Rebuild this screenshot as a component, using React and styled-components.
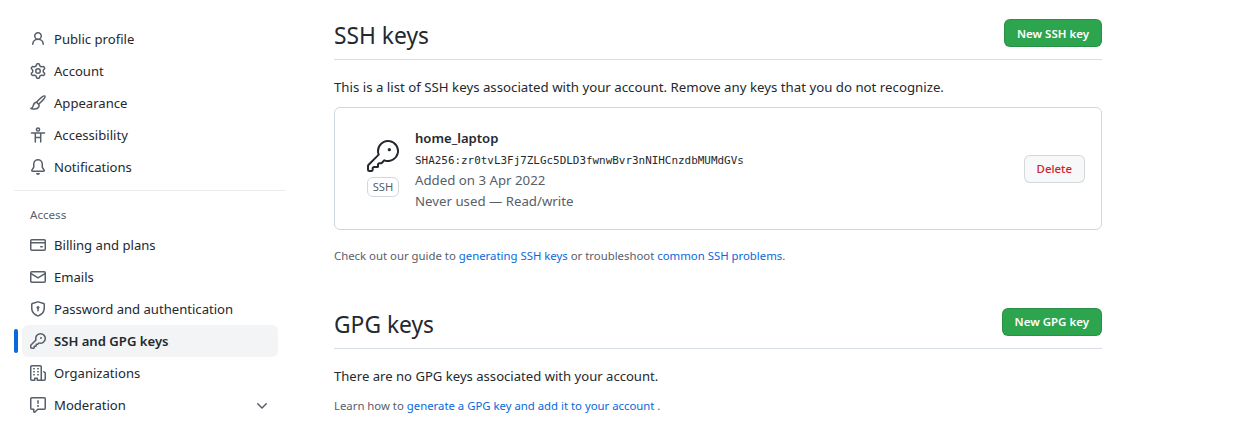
import React from "react"
import styled, { createGlobalStyle } from "styled-components"
import { GoKey } from "react-icons/go"

const GlobalStyle = createGlobalStyle`
  html, body {
    margin: 0;
    padding: 0;
    background: #ffffff;
    overflow: hidden;
  }
  body {
    color: #24292f;
    font-family: "Noto Sans", "Open Sans", sans-serif;
    font-size: 13.2px;
  }
`

const Page = styled.div`
  display: flex;
  align-items: flex-start;
  width: 1244px;
  height: 427px;
  overflow: hidden;
`

const Sidebar = styled.nav`
  width: 272px;
  margin-left: 14px;
  padding-top: 23px;
  flex-shrink: 0;
`

const NavList = styled.div`
  display: flex;
  flex-direction: column;
`

const NavRow = styled.div`
  position: relative;
  display: flex;
  align-items: center;
  height: 32px;
  width: 256px;
  margin-left: 8px;
  padding: 0 8px;
  box-sizing: border-box;
  border-radius: 6px;
  background: ${props => (props.$active ? "#f3f4f6" : "transparent")};
  font-weight: ${props => (props.$active ? 600 : 400)};

  ${props =>
    props.$active &&
    `
    &::before {
      content: "";
      position: absolute;
      left: -8px;
      top: 4px;
      width: 4px;
      height: 24px;
      border-radius: 6px;
      background: #0969da;
    }
  `}
`

const NavIcon = styled.span`
  display: flex;
  width: 16px;
  margin-right: 8px;
  color: #57606a;
`

const NavLabel = styled.span`
  flex: 1;
  font-size: 13.1px;
  white-space: nowrap;
`

const Chevron = styled.span`
  display: flex;
  color: #57606a;
`

const Divider = styled.div`
  height: 1px;
  margin: 7px 0 16px;
  background: #eaecef;
`

const GroupTitle = styled.div`
  height: 16px;
  margin-bottom: 6px;
  padding-left: 16px;
  color: #57606a;
  font-size: 11.6px;
  line-height: 16px;
`

const Main = styled.main`
  width: 768px;
  margin-left: 48px;
  flex-shrink: 0;
`

const Header = styled.div`
  display: flex;
  align-items: center;
  justify-content: space-between;
  height: 59px;
  border-bottom: 1px solid #d8dee4;
`

const GpgHeader = styled(Header)`
  height: 60px;
  margin-top: 23px;
`

const Heading = styled.h2`
  margin: ${props => (props.$low ? "14px" : "12px")} 0 0;
  font-size: 22.8px;
  font-weight: 400;
  line-height: 30px;
`

const PrimaryButton = styled.button`
  height: 28px;
  margin-top: 7px;
  padding: 0 12px;
  border: 1px solid rgba(27, 31, 36, 0.15);
  border-radius: 6px;
  background: #2da44e;
  color: #ffffff;
  font-family: inherit;
  font-size: 11.5px;
  font-weight: 600;
`

const Lead = styled.p`
  margin: 17px 0 10px;
  font-size: 13.25px;
  line-height: 20px;
`

const KeyCard = styled.div`
  display: flex;
  align-items: center;
  height: 123px;
  padding: 0 16px;
  box-sizing: border-box;
  border: 1px solid #d0d7de;
  border-radius: 6px;
`

const KeyBadge = styled.div`
  display: flex;
  flex-direction: column;
  align-items: center;
  gap: 5px;
  width: 32px;
  margin: 0 16px;
`

const Label = styled.span`
  width: 32px;
  height: 20px;
  box-sizing: border-box;
  border: 1px solid #d0d7de;
  border-radius: 6px;
  color: #57606a;
  font-size: 11.2px;
  line-height: 18px;
  text-align: center;
`

const KeyInfo = styled.div`
  flex: 1;
  margin-top: 3px;
`

const KeyName = styled.div`
  font-size: 13.1px;
  font-weight: 600;
  line-height: 20px;
`

const Fingerprint = styled.code`
  display: block;
  margin: 2px 0 -2px;
  font-family: "DejaVu Sans Mono", monospace;
  font-size: 10.93px;
  line-height: 22px;
`

const KeyMeta = styled.div`
  color: #57606a;
  font-size: 13.25px;
  line-height: 21px;
`

const DangerButton = styled.button`
  height: 28px;
  padding: 0 12px;
  border: 1px solid rgba(27, 31, 36, 0.15);
  border-radius: 6px;
  background: #f6f8fa;
  color: #cf222e;
  font-family: inherit;
  font-size: 11.4px;
  font-weight: 500;
`

const Note = styled.p`
  margin: 17px 0 0;
  color: #57606a;
  font-size: 11.37px;
  line-height: 18px;
`

const TextLink = styled.a`
  color: #0969da;
`

const EmptyText = styled.p`
  margin: 17px 0 0;
  font-size: 13.1px;
  line-height: 20px;
`

const Learn = styled.p`
  margin: 11px 0 0;
  color: #57606a;
  font-size: 11.35px;
  line-height: 18px;
`

// react-icons only ships the thinner 24px octicons, the sidebar uses the 16px cut
const octicon = d => () =>
  (
    <svg width="16" height="16" viewBox="0 0 16 16" fill="currentColor" fillRule="evenodd">
      <path d={d} />
    </svg>
  )

const PersonIcon = octicon(
  "M10.5 5a2.5 2.5 0 11-5 0 2.5 2.5 0 015 0zm.061 3.073a4 4 0 10-5.123 0 6.004 6.004 0 00-3.431 5.142.75.75 0 001.498.07 4.5 4.5 0 018.99 0 .75.75 0 101.498-.07 6.005 6.005 0 00-3.432-5.142z"
)
const GearIcon = octicon(
  "M7.429 1.525a6.593 6.593 0 011.142 0c.036.003.108.036.137.146l.289 1.105c.147.56.55.967.997 1.189.174.086.341.183.501.29.417.278.97.423 1.53.27l1.102-.303c.11-.03.175.016.195.046.219.31.41.641.573.989.014.031.022.11-.059.19l-.815.806c-.411.406-.562.957-.53 1.456a4.588 4.588 0 010 .582c-.032.499.119 1.05.53 1.456l.815.806c.08.08.073.159.059.19a6.494 6.494 0 01-.573.99c-.02.029-.086.074-.195.045l-1.103-.303c-.559-.153-1.112-.008-1.529.27-.16.107-.327.204-.5.29-.449.222-.851.628-.998 1.189l-.289 1.105c-.029.11-.101.143-.137.146a6.613 6.613 0 01-1.142 0c-.036-.003-.108-.037-.137-.146l-.289-1.105c-.147-.56-.55-.967-.997-1.189a4.502 4.502 0 01-.501-.29c-.417-.278-.97-.423-1.53-.27l-1.102.303c-.11.03-.175-.016-.195-.046a6.492 6.492 0 01-.573-.989c-.014-.031-.022-.11.059-.19l.815-.806c.411-.406.562-.957.53-1.456a4.587 4.587 0 010-.582c.032-.499-.119-1.05-.53-1.456l-.815-.806c-.08-.08-.073-.159-.059-.19a6.44 6.44 0 01.573-.99c.02-.029.086-.075.195-.045l1.103.303c.559.153 1.112.008 1.529-.27.16-.107.327-.204.5-.29.449-.222.851-.628.998-1.189l.289-1.105c.029-.11.101-.143.137-.146zM8 0c-.236 0-.47.01-.701.03-.743.065-1.29.615-1.458 1.261l-.29 1.106c-.017.066-.078.158-.211.224a5.994 5.994 0 00-.668.386c-.123.082-.233.09-.3.071L3.27 2.776c-.644-.177-1.392.02-1.82.63a7.977 7.977 0 00-.704 1.217c-.315.675-.111 1.422.363 1.891l.815.806c.05.048.098.147.088.294a6.084 6.084 0 000 .772c.01.147-.038.246-.088.294l-.815.806c-.474.469-.678 1.216-.363 1.891.2.428.436.835.704 1.218.428.609 1.176.806 1.82.63l1.103-.303c.066-.019.176-.011.299.071.213.143.436.272.668.386.133.066.194.158.212.224l.289 1.106c.169.646.715 1.196 1.458 1.26a8.094 8.094 0 001.402 0c.743-.064 1.29-.614 1.458-1.26l.29-1.106c.017-.066.078-.158.211-.224a5.98 5.98 0 00.668-.386c.123-.082.233-.09.3-.071l1.102.302c.644.177 1.392-.02 1.82-.63.268-.382.505-.789.704-1.217.315-.675.111-1.422-.364-1.891l-.814-.806c-.05-.048-.098-.147-.088-.294a6.1 6.1 0 000-.772c-.01-.147.039-.246.088-.294l.814-.806c.475-.469.679-1.216.364-1.891a7.992 7.992 0 00-.704-1.218c-.428-.609-1.176-.806-1.82-.63l-1.103.303c-.066.019-.176.011-.299-.071a5.991 5.991 0 00-.668-.386c-.133-.066-.194-.158-.212-.224L10.16 1.29C9.99.645 9.444.095 8.701.031A8.094 8.094 0 008 0zm1.5 8a1.5 1.5 0 11-3 0 1.5 1.5 0 013 0zM11 8a3 3 0 11-6 0 3 3 0 016 0z"
)
const BellIcon = octicon(
  "M8 16a2 2 0 001.985-1.75c.017-.137-.097-.25-.235-.25h-3.5c-.138 0-.252.113-.235.25A2 2 0 008 16zM3 5a5 5 0 0110 0v2.947c0 .05.015.098.042.139l1.703 2.555A1.518 1.518 0 0113.482 13H2.518a1.518 1.518 0 01-1.263-2.36l1.703-2.554A.25.25 0 003 7.947V5zm5-3.5A3.5 3.5 0 004.5 5v2.947c0 .346-.102.683-.294.97l-1.703 2.556a.018.018 0 00-.003.01l.001.006c0 .002.002.004.004.006a.017.017 0 00.006.004l.007.001h10.964l.007-.001a.016.016 0 00.006-.004.016.016 0 00.004-.006l.001-.007a.017.017 0 00-.003-.01l-1.703-2.554a1.75 1.75 0 01-.294-.97V5A3.5 3.5 0 008 1.5z"
)
const CardIcon = octicon(
  "M10.75 9a.75.75 0 000 1.5h1.5a.75.75 0 000-1.5h-1.5zM0 3.75C0 2.784.784 2 1.75 2h12.5c.966 0 1.75.784 1.75 1.75v8.5A1.75 1.75 0 0114.25 14H1.75A1.75 1.75 0 010 12.25v-8.5zm14.5 0V5h-13V3.75a.25.25 0 01.25-.25h12.5a.25.25 0 01.25.25zm0 2.75h-13v5.75c0 .138.112.25.25.25h12.5a.25.25 0 00.25-.25V6.5z"
)
const MailIcon = octicon(
  "M1.75 2A1.75 1.75 0 000 3.75v.736a.75.75 0 000 .027v7.737C0 13.216.784 14 1.75 14h12.5A1.75 1.75 0 0016 12.25v-8.5A1.75 1.75 0 0014.25 2H1.75zM14.5 4.07v-.32a.25.25 0 00-.25-.25H1.75a.25.25 0 00-.25.25v.32L8 7.88l6.5-3.81zm-13 1.74v6.441c0 .138.112.25.25.25h12.5a.25.25 0 00.25-.25V5.809L8.38 9.397a.75.75 0 01-.76 0L1.5 5.809z"
)
const ShieldIcon = octicon(
  "M7.467.133a1.75 1.75 0 011.066 0l5.25 1.68A1.75 1.75 0 0115 3.48V7c0 1.566-.32 3.182-1.303 4.682-.983 1.498-2.585 2.813-5.032 3.855a1.7 1.7 0 01-1.33 0c-2.447-1.042-4.049-2.357-5.032-3.855C1.32 10.182 1 8.566 1 7V3.48a1.75 1.75 0 011.217-1.667l5.25-1.68zm.61 1.429a.25.25 0 00-.153 0l-5.25 1.68a.25.25 0 00-.174.238V7c0 1.358.275 2.666 1.057 3.86.784 1.194 2.121 2.34 4.366 3.297a.2.2 0 00.154 0c2.245-.956 3.582-2.104 4.366-3.298C13.225 9.666 13.5 8.36 13.5 7V3.48a.25.25 0 00-.174-.237l-5.25-1.68zM9.5 6.5a1.5 1.5 0 01-.75 1.3v1.95a.75.75 0 01-1.5 0V7.8A1.5 1.5 0 119.5 6.5z"
)
const KeyIcon = octicon(
  "M6.5 5.5a4 4 0 112.731 3.795.75.75 0 00-.768.18L7.44 10.5H6.25a.75.75 0 00-.75.75v1.19l-.06.06H4.25a.75.75 0 00-.75.75v1.19l-.06.06H1.75a.25.25 0 01-.25-.25v-1.69l5.024-5.023a.75.75 0 00.181-.768A3.995 3.995 0 016.5 5.5zm4-5.5a5.5 5.5 0 00-5.348 6.788L.22 11.72a.75.75 0 00-.22.53v2C0 15.216.784 16 1.75 16h2a.75.75 0 00.53-.22l.5-.5a.75.75 0 00.22-.53V14h.75a.75.75 0 00.53-.22l.5-.5a.75.75 0 00.22-.53V12h.75a.75.75 0 00.53-.22l.932-.932A5.5 5.5 0 1010.5 0zm.5 6a1 1 0 100-2 1 1 0 000 2z"
)
const OrgIcon = octicon(
  "M1.5 14.25c0 .138.112.25.25.25H4v-1.25a.75.75 0 01.75-.75h2.5a.75.75 0 01.75.75v1.25h2.25a.25.25 0 00.25-.25V1.75a.25.25 0 00-.25-.25h-8.5a.25.25 0 00-.25.25v12.5zM1.75 16A1.75 1.75 0 010 14.25V1.75C0 .784.784 0 1.75 0h8.5C11.216 0 12 .784 12 1.75v12.5c0 .085-.006.168-.018.25h2.268a.25.25 0 00.25-.25V8.285a.25.25 0 00-.111-.208l-1.055-.703a.75.75 0 11.832-1.248l1.055.703c.487.325.779.871.779 1.456v5.965A1.75 1.75 0 0114.25 16h-3.5a.75.75 0 01-.197-.026c-.099.017-.2.026-.303.026h-3a.75.75 0 01-.75-.75V14h-1v1.25a.75.75 0 01-.75.75h-3zM3 3.75A.75.75 0 013.75 3h.5a.75.75 0 010 1.5h-.5A.75.75 0 013 3.75zM3.75 6a.75.75 0 000 1.5h.5a.75.75 0 000-1.5h-.5zM3 9.75A.75.75 0 013.75 9h.5a.75.75 0 010 1.5h-.5A.75.75 0 013 9.75zM7.75 9a.75.75 0 000 1.5h.5a.75.75 0 000-1.5h-.5zM7 6.75A.75.75 0 017.75 6h.5a.75.75 0 010 1.5h-.5A.75.75 0 017 6.75zM7.75 3a.75.75 0 000 1.5h.5a.75.75 0 000-1.5h-.5z"
)
const ReportIcon = octicon(
  "M1.75 1.5a.25.25 0 00-.25.25v9.5c0 .138.112.25.25.25h2a.75.75 0 01.75.75v2.19l2.72-2.72a.75.75 0 01.53-.22h6.5a.25.25 0 00.25-.25v-9.5a.25.25 0 00-.25-.25H1.75zM0 1.75C0 .784.784 0 1.75 0h12.5C15.216 0 16 .784 16 1.75v9.5A1.75 1.75 0 0114.25 13H8.06l-2.573 2.573A1.457 1.457 0 013 14.543V13H1.75A1.75 1.75 0 010 11.25v-9.5zM9 9a1 1 0 11-2 0 1 1 0 012 0zm-.25-5.25a.75.75 0 00-1.5 0v2.5a.75.75 0 001.5 0v-2.5z"
)
const ChevronIcon = octicon(
  "M12.78 6.22a.75.75 0 010 1.06l-4.25 4.25a.75.75 0 01-1.06 0L3.22 7.28a.75.75 0 011.06-1.06L8 9.94l3.72-3.72a.75.75 0 011.06 0z"
)

const BrushIcon = () => (
  <svg width="16" height="16" viewBox="0 0 16 16" fill="none" stroke="currentColor" strokeWidth="1.5" strokeLinejoin="round" strokeLinecap="round">
    <path d="M14.9 1.1c-1-.9-4.4 1.6-8.3 6.1l2 2c4.6-3.9 7.2-7.1 6.3-8.1Z" />
    <path d="M6.6 7.3c-2.5.2-3 1.8-3.3 3.3-.2 1-.9 2.3-2.5 2.8 2.7.7 6.8.8 8-1.6.5-1 .4-1.9-.2-2.6" />
  </svg>
)

const AccessibilityIcon = () => (
  <svg width="16" height="16" viewBox="0 0 16 16" fill="none" stroke="currentColor" strokeWidth="1.5" strokeLinecap="round">
    <circle cx="8" cy="2.5" r="1.6" />
    <path d="M1.5 5.9h13M5.3 6v9M10.7 6v9M5.3 10.5h5.4" />
  </svg>
)

const topItems = [
  { label: "Public profile", icon: PersonIcon },
  { label: "Account", icon: GearIcon },
  { label: "Appearance", icon: BrushIcon },
  { label: "Accessibility", icon: AccessibilityIcon },
  { label: "Notifications", icon: BellIcon },
]

const accessItems = [
  { label: "Billing and plans", icon: CardIcon },
  { label: "Emails", icon: MailIcon },
  { label: "Password and authentication", icon: ShieldIcon },
  { label: "SSH and GPG keys", icon: KeyIcon, active: true },
  { label: "Organizations", icon: OrgIcon },
  { label: "Moderation", icon: ReportIcon, expandable: true },
]

const NavItem = ({ label, icon: Icon, active, expandable }) => (
  <NavRow $active={active}>
    <NavIcon>
      <Icon />
    </NavIcon>
    <NavLabel>{label}</NavLabel>
    {expandable && (
      <Chevron>
        <ChevronIcon />
      </Chevron>
    )}
  </NavRow>
)

const App = () => (
  <Page>
    <GlobalStyle />
    <Sidebar>
      <NavList>
        {topItems.map(item => (
          <NavItem key={item.label} {...item} />
        ))}
      </NavList>
      <Divider />
      <GroupTitle>Access</GroupTitle>
      <NavList>
        {accessItems.map(item => (
          <NavItem key={item.label} {...item} />
        ))}
      </NavList>
    </Sidebar>

    <Main>
      <Header>
        <Heading>SSH keys</Heading>
        <PrimaryButton>New SSH key</PrimaryButton>
      </Header>
      <Lead>
        This is a list of SSH keys associated with your account. Remove any keys
        that you do not recognize.
      </Lead>
      <KeyCard>
        <KeyBadge>
          <GoKey size={32} color="#24292f" />
          <Label>SSH</Label>
        </KeyBadge>
        <KeyInfo>
          <KeyName>home_laptop</KeyName>
          <Fingerprint>SHA256:zr0tvL3Fj7ZLGc5DLD3fwnwBvr3nNIHCnzdbMUMdGVs</Fingerprint>
          <KeyMeta>Added on 3 Apr 2022</KeyMeta>
          <KeyMeta>Never used — Read/write</KeyMeta>
        </KeyInfo>
        <DangerButton>Delete</DangerButton>
      </KeyCard>
      <Note>
        Check out our guide to <TextLink>generating SSH keys</TextLink> or
        troubleshoot <TextLink>common SSH problems</TextLink>.
      </Note>

      <GpgHeader>
        <Heading $low>GPG keys</Heading>
        <PrimaryButton>New GPG key</PrimaryButton>
      </GpgHeader>
      <EmptyText>There are no GPG keys associated with your account.</EmptyText>
      <Learn>
        Learn how to <TextLink>generate a GPG key and add it to your account</TextLink> .
      </Learn>
    </Main>
  </Page>
)

export default App
